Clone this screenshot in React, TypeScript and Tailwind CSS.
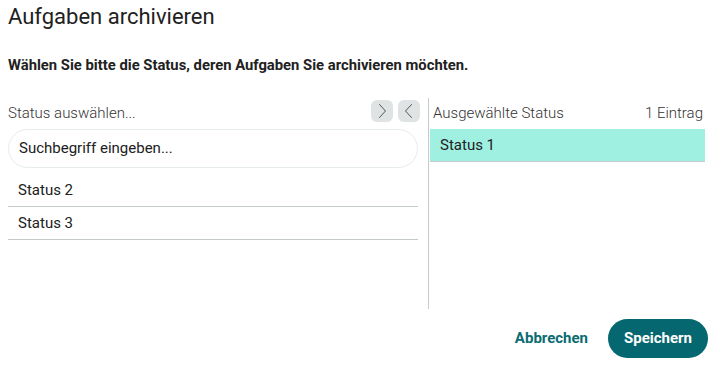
export default function App() {
  const available = ["Status 2", "Status 3"];
  const selected = ["Status 1"];

  return (
    <div className="w-[722px] h-[369px] bg-white font-['Roboto',sans-serif] text-[#212121] flex flex-col">
      {/* Header */}
      <h1 className="px-2 pt-[4px] text-[22px] leading-[26px] font-normal">Aufgaben archivieren</h1>
      <p className="px-2 mt-[26px] text-[14.8px] leading-[18px] font-bold">
        Wählen Sie bitte die Status, deren Aufgaben Sie archivieren möchten.
      </p>

      {/* Lists */}
      <div className="flex mt-[24px] h-[211px]">
        {/* Available */}
        <div className="w-[412px] ml-2 flex flex-col">
          <div className="flex items-start justify-between h-[31px]">
            <span className="text-[15px] leading-[18px] font-light text-[#333] mt-[6px]">Status auswählen...</span>
            <div className="flex gap-[5px] mt-[2px]">
              <button className="w-[22px] h-[22px] rounded-md bg-[#dfe3e3] flex items-center justify-center">
                <svg width="22" height="22" viewBox="0 0 22 22" fill="none" stroke="#555" strokeWidth="1" strokeLinecap="round" strokeLinejoin="round">
                  <polyline points="8.5,4.5 14.5,11 8.5,17.5" />
                </svg>
              </button>
              <button className="w-[22px] h-[22px] rounded-md bg-[#dfe3e3] flex items-center justify-center">
                <svg width="22" height="22" viewBox="0 0 22 22" fill="none" stroke="#555" strokeWidth="1" strokeLinecap="round" strokeLinejoin="round">
                  <polyline points="13.5,4.5 7.5,11 13.5,17.5" />
                </svg>
              </button>
            </div>
          </div>
          <div className="w-[410px] h-[39px] rounded-full border border-[#e6ecec] flex items-center px-[10px] text-[15px]">
            Suchbegriff eingeben...
          </div>
          <div className="flex flex-col mt-[5px] w-[410px]">
            {available.map((s, i) => (
              <div
                key={s}
                className={
                  i === 0
                    ? "h-[34px] pt-px flex items-center px-[10px] text-[15px] border-b border-[#c5cbcc]"
                    : "h-[33px] flex items-center px-[10px] text-[15px] border-b border-[#c5cbcc]"
                }
              >
                {s}
              </div>
            ))}
          </div>
        </div>

        {/* Divider */}
        <div className="w-px bg-[#c5cbcc] ml-2" />

        {/* Selected */}
        <div className="w-[275px] ml-px flex flex-col">
          <div className="flex items-start justify-between h-[31px] pl-[3px] pr-[2px]">
            <span className="text-[15px] leading-[18px] font-light text-[#333] mt-[6px]">Ausgewählte Status</span>
            <span className="text-[15px] leading-[18px] font-light text-[#333] mt-[6px]">1 Eintrag</span>
          </div>
          {selected.map((s) => (
            <div key={s} className="h-[33px] flex items-center px-[10px] text-[15px] bg-[#a0f0e2] border-b border-[#c5cbcc]">
              {s}
            </div>
          ))}
        </div>
      </div>

      {/* Footer */}
      <div className="flex items-center justify-end gap-5 pr-[14px] mt-[10px]">
        <button className="text-[15px] font-bold text-[#0a6b72]">Abbrechen</button>
        <button className="w-[100px] h-[39px] rounded-full bg-[#05676f] text-white text-[15px] font-bold">Speichern</button>
      </div>
    </div>
  );
}
